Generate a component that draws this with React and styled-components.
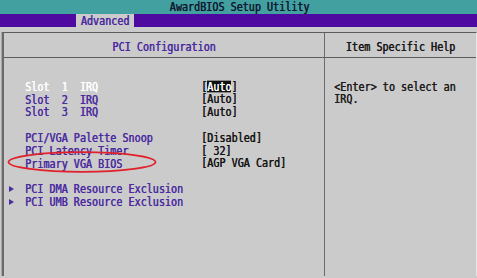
import React from "react";
import styled, { createGlobalStyle } from "styled-components";

const Global = createGlobalStyle`
  html, body { margin: 0; padding: 0; background: #ffffff; }
`;

const Root = styled.div`
  position: relative;
  width: 477px;
  height: 278px;
  display: flex;
  flex-direction: column;
  background: #cbcbcb;
  font-family: "DejaVu Sans Mono", "Liberation Mono", monospace;
  font-size: 10.1px;
  overflow: hidden;
`;

const Glyphs = styled.span`
  display: inline-block;
  white-space: pre;
  line-height: 9.5px;
  transform: scaleY(1.3);
  text-shadow: 0.45px 0 0 currentColor;
`;

const TitleBar = styled.div`
  height: 14px;
  background: #42a0a0;
  color: #111830;
  display: flex;
  align-items: center;
  justify-content: center;
  padding-left: 2px;
`;

const MenuBar = styled.div`
  height: 13px;
  background: #4e0aa0;
  display: flex;
  padding-left: 76px;
  padding-right: 2px;
`;

const Tab = styled.div`
  width: 58px;
  background: #cbcbcb;
  color: #4a2a9e;
  display: flex;
  align-items: center;
  justify-content: center;
`;

const Spacer = styled.div`
  height: 5px;
`;

const Panel = styled.div`
  flex: 1;
  margin-left: 2px;
  margin-bottom: 2px;
  border-top: 1px solid #5c5c5c;
  border-left: 2px solid #6a6a6a;
  border-right: 1px solid #e6e6e6;
  box-shadow: -1px 0 0 #a8a8a8;
  display: grid;
  grid-template-columns: 321px 1fr;
  grid-template-rows: 25px 1fr;
`;

const HeadCell = styled.div`
  border-bottom: 1px solid #5c5c5c;
  border-right: ${(p) => (p.$divider ? "1px solid #6a6a6a" : "none")};
  display: flex;
  align-items: center;
  justify-content: center;
  color: ${(p) => p.$color};
  padding-top: 3px;
`;

const BodyCell = styled.div`
  border-right: ${(p) => (p.$divider ? "1px solid #6a6a6a" : "none")};
  padding-top: ${(p) => p.$top}px;
  padding-left: ${(p) => p.$left}px;
  display: flex;
  flex-direction: column;
`;

const Row = styled.div`
  height: 12.8px;
  display: grid;
  grid-template-columns: 21px 176px 1fr;
  align-items: center;
`;

const Marker = styled.div`
  display: flex;
  align-items: center;
  padding-left: 5px;
  height: 100%;
`;

const Label = styled.div`
  color: ${(p) => (p.$active ? "#ffffff" : "#4b2ba0")};
`;

const Value = styled.div`
  color: #141414;
  display: flex;
  align-items: center;
`;

const Cursor = styled(Glyphs)`
  background: #101010;
  color: #ffffff;
  height: 9px;
  line-height: 9px;
`;

const Blank = styled.div`
  height: 12.8px;
`;

const HelpLine = styled.div`
  height: 12.8px;
  display: flex;
  align-items: center;
  color: #1c1c1c;
`;

const Annotation = styled.svg`
  position: absolute;
  left: 0;
  top: 0;
  pointer-events: none;
`;

const Triangle = () => (
  <svg width="5" height="6" viewBox="0 0 5 6">
    <polygon points="0,0 5,3 0,6" fill="#4b2ba0" />
  </svg>
);

const items = [
  { label: "Slot  1  IRQ", value: "Auto", active: true },
  { label: "Slot  2  IRQ", value: "[Auto]" },
  { label: "Slot  3  IRQ", value: "[Auto]" },
  null,
  { label: "PCI/VGA Palette Snoop", value: "[Disabled]" },
  { label: "PCI Latency Timer", value: "[ 32]" },
  { label: "Primary VGA BIOS", value: "[AGP VGA Card]" },
  null,
  { label: "PCI DMA Resource Exclusion", sub: true },
  { label: "PCI UMB Resource Exclusion", sub: true },
];

export default function App() {
  return (
    <>
      <Global />
      <Root>
        <TitleBar>
          <Glyphs>AwardBIOS Setup Utility</Glyphs>
        </TitleBar>
        <MenuBar>
          <Tab>
            <Glyphs>Advanced</Glyphs>
          </Tab>
        </MenuBar>
        <Spacer />
        <Panel>
          <HeadCell $divider $color="#4b2ba0">
            <Glyphs>PCI Configuration</Glyphs>
          </HeadCell>
          <HeadCell $color="#161616">
            <Glyphs>Item Specific Help</Glyphs>
          </HeadCell>
          <BodyCell $divider $top={22} $left={0}>
            {items.map((it, i) =>
              it === null ? (
                <Blank key={i} />
              ) : (
                <Row key={i}>
                  <Marker>{it.sub ? <Triangle /> : null}</Marker>
                  <Label $active={it.active}>
                    <Glyphs>{it.label}</Glyphs>
                  </Label>
                  <Value>
                    {it.active ? (
                      <>
                        <Glyphs>[</Glyphs>
                        <Cursor>Auto</Cursor>
                        <Glyphs>]</Glyphs>
                      </>
                    ) : it.value ? (
                      <Glyphs>{it.value}</Glyphs>
                    ) : null}
                  </Value>
                </Row>
              )
            )}
          </BodyCell>
          <BodyCell $top={22} $left={9}>
            <HelpLine>
              <Glyphs>{"<Enter> to select an"}</Glyphs>
            </HelpLine>
            <HelpLine>
              <Glyphs>IRQ.</Glyphs>
            </HelpLine>
          </BodyCell>
        </Panel>
        <Annotation width="477" height="278" viewBox="0 0 477 278">
          <ellipse
            cx="82"
            cy="162"
            rx="73.5"
            ry="9.8"
            fill="none"
            stroke="#e0202a"
            strokeWidth="1.8"
          />
        </Annotation>
      </Root>
    </>
  );
}
